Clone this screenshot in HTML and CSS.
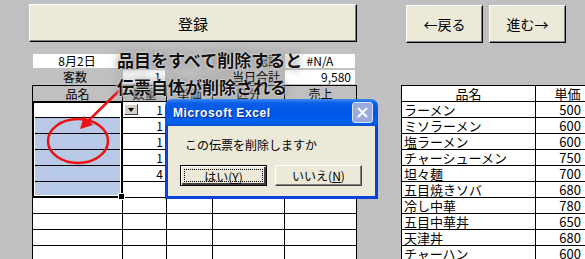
FILE: index.html
```html
<!DOCTYPE html>
<html>
<head>
    <meta charset="UTF-8">
    <title>伝票入力</title>
    <link rel="stylesheet" href="styles.css">
</head>
<body>
<div class="sheet">

    <div class="toolbar">
        <button class="btn btnRegister">登録</button>
        <div class="nav">
            <button class="btn btnNav">←戻る</button>
            <button class="btn btnNav">進む→</button>
        </div>
    </div>

    <div class="main">
        <div class="slip">
            <div class="info">
                <div class="box center">8月2日</div>
                <div></div>
                <div></div>
                <div class="label">総計</div>
                <div class="box center">#N/A</div>
                <div class="label center">客数</div>
                <div class="box right">1</div>
                <div></div>
                <div class="label">当日合計</div>
                <div class="box right">9,580</div>
            </div>

            <table class="slipTable">
                <colgroup>
                    <col style="width:90px"><col style="width:44px"><col style="width:46px"><col style="width:72px"><col style="width:72px">
                </colgroup>
                <tr class="head"><td>品名</td><td>数量</td><td>単価</td><td>区分</td><td>売上</td></tr>
                <tr><td></td><td class="qty"><span class="dropdown"></span>1</td><td></td><td></td><td></td></tr>
                <tr><td class="sel"></td><td class="num">1</td><td></td><td></td><td></td></tr>
                <tr><td class="sel"></td><td class="num">1</td><td></td><td></td><td></td></tr>
                <tr><td class="sel"></td><td class="num">1</td><td></td><td></td><td></td></tr>
                <tr><td class="sel"></td><td class="num">4</td><td></td><td></td><td></td></tr>
                <tr><td class="sel"></td><td></td><td></td><td></td><td></td></tr>
                <tr><td></td><td></td><td></td><td></td><td></td></tr>
                <tr><td></td><td></td><td></td><td></td><td></td></tr>
                <tr><td></td><td></td><td></td><td></td><td></td></tr>
                <tr><td></td><td></td><td></td><td></td><td></td></tr>
                <tr><td></td><td></td><td></td><td></td><td></td></tr>
            </table>

            <div class="selection"><span class="fillHandle"></span></div>
        </div>

        <table class="menu">
            <colgroup><col style="width:134px"><col style="width:64px"></colgroup>
            <tr class="head"><td class="center">品名</td><td class="center">単価</td></tr>
            <tr><td>ラーメン</td><td class="num">500</td></tr>
            <tr><td>ミソラーメン</td><td class="num">600</td></tr>
            <tr><td>塩ラーメン</td><td class="num">600</td></tr>
            <tr><td>チャーシューメン</td><td class="num">750</td></tr>
            <tr><td>坦々麺</td><td class="num">700</td></tr>
            <tr><td>五目焼きソバ</td><td class="num">680</td></tr>
            <tr><td>冷し中華</td><td class="num">780</td></tr>
            <tr><td>五目中華丼</td><td class="num">650</td></tr>
            <tr><td>天津丼</td><td class="num">680</td></tr>
            <tr><td>チャーハン</td><td class="num">600</td></tr>
        </table>
    </div>

    <!-- annotation drawn over the sheet -->
    <svg class="marks" width="585" height="259" viewBox="0 0 585 259">
        <ellipse cx="78" cy="141" rx="30" ry="22" fill="none" stroke="#ee1111" stroke-width="2.5"/>
        <line x1="124" y1="86" x2="87" y2="122" stroke="#ee1111" stroke-width="2.5"/>
        <polygon points="80,129 84,116 93,125" fill="#ee1111"/>
    </svg>

    <div class="callout">品目をすべて削除すると<br>伝票自体が削除される</div>

    <div class="dialog">
        <div class="titleBar">
            <span class="title">Microsoft Excel</span>
            <span class="close">
                <svg width="13" height="13" viewBox="0 0 13 13"><path d="M2 2 L11 11 M11 2 L2 11" stroke="#fff" stroke-width="2"/></svg>
            </span>
        </div>
        <div class="dialogBody">
            <p class="message">この伝票を削除しますか</p>
            <div class="dialogButtons">
                <button class="dlgBtn default"><span class="focus">はい(<u>Y</u>)</span></button>
                <button class="dlgBtn">いいえ(<u>N</u>)</button>
            </div>
        </div>
    </div>

</div>
</body>
</html>
```

FILE: styles.css
```css
body {
    margin: 0;
    background-color: #c0c0c0;
    font-family: "Noto Sans CJK JP", sans-serif;
    font-size: 12px;
    color: #000;
}

.sheet {
    position: relative;
    width: 585px;
    height: 259px;
    overflow: hidden;
}

/* buttons on top */
.toolbar {
    display: flex;
    padding: 4px 0 0 29px;
}

.btn {
    background-color: #ece9d8;
    border: 1px solid;
    border-color: #fff #000 #000 #fff;
    box-shadow: inset -1px -1px 0 #808080;
    font-family: "Noto Sans CJK JP", sans-serif;
    font-size: 14px;
    color: #000;
    padding: 0;
}

.btnRegister {
    width: 328px;
    height: 38px;
    font-size: 15px;
}

.nav {
    display: flex;
    gap: 6px;
    margin: 1px 0 0 49px;
}

.btnNav {
    width: 77px;
    height: 38px;
}

.main {
    display: flex;
    align-items: flex-start;
    margin-top: 11px;
}

/* slip on the left */
.slip {
    position: relative;
    margin-left: 32px;
    width: 325px;
}

.info {
    display: grid;
    grid-template-columns: 90px 44px 46px 72px 72px;
    grid-template-rows: 14px 14px;
    row-gap: 2px;
    margin-bottom: 1px;
    line-height: 14px;
}

.box {
    background-color: #fff;
    margin: 0 1px;
    padding: 0 4px;
}

.label {
    text-align: right;
    padding-right: 4px;
}

.center {
    text-align: center;
}

.right {
    text-align: right;
}

table {
    border-collapse: collapse;
    table-layout: fixed;
}

td {
    border: 1px solid #000;
    height: 15px;
    padding: 0 3px;
    line-height: 15px;
    white-space: nowrap;
    overflow: hidden;
}

.slipTable {
    width: 325px;
}

.slipTable td {
    background-color: #fff;
}

.slipTable .head td {
    background-color: #c0c0c0;
    text-align: center;
}

.slipTable td.sel {
    background-color: #b7c9e7;
}

.num {
    text-align: right;
}

.qty {
    text-align: right;
    padding-left: 1px;
}

.dropdown {
    float: left;
    width: 14px;
    height: 11px;
    margin-top: 2px;
    background-color: #d4d0c8;
    border: 1px solid;
    border-color: #fff #404040 #404040 #fff;
    box-sizing: border-box;
    position: relative;
}

.dropdown::after {
    content: "";
    position: absolute;
    left: 3px;
    top: 3px;
    border-left: 3px solid transparent;
    border-right: 3px solid transparent;
    border-top: 4px solid #000;
}

.selection {
    position: absolute;
    left: 0;
    top: 47px;
    width: 91px;
    height: 97px;
    border: 2px solid #000;
    box-sizing: border-box;
    box-shadow: inset 0 0 0 1px #fff;
}

.fillHandle {
    position: absolute;
    right: -4px;
    bottom: -4px;
    width: 5px;
    height: 5px;
    background-color: #000;
    border: 1px solid #fff;
}

/* menu on the right */
.menu {
    margin: 31px 0 0 44px;
    width: 198px;
    background-color: #fff;
    font-size: 13px;
}

.menu td {
    padding: 0 2px;
}

.menu td.num {
    padding-right: 18px;
}

/* annotation */
.marks {
    position: absolute;
    left: 0;
    top: 0;
}

.callout {
    position: absolute;
    left: 117px;
    top: 46px;
    font-size: 17px;
    font-weight: 700;
    line-height: 27px;
    color: #111;
    white-space: nowrap;
    text-shadow: 0 0 2px #fff, 0 0 5px #ddd, 0 0 9px #666;
}

/* message box */
.dialog {
    position: absolute;
    left: 165px;
    top: 99px;
    width: 213px;
    height: 100px;
    display: flex;
    flex-direction: column;
}

.titleBar {
    height: 27px;
    border-radius: 7px 7px 0 0;
    background: linear-gradient(#3d8cf6, #0a5ee8 15%, #0055e5 50%, #0361f2 85%, #0a4fd0);
    display: flex;
    align-items: center;
    justify-content: space-between;
    padding: 0 5px 0 8px;
}

.title {
    color: #fff;
    font-family: "Liberation Sans", Arial, sans-serif;
    font-weight: 700;
    font-size: 12px;
    letter-spacing: 0.6px;
    text-shadow: 1px 1px 0 #0a2a8a;
}

.close {
    width: 19px;
    height: 19px;
    border: 1px solid #dde4f8;
    border-radius: 3px;
    background-color: #9aaae0;
    display: flex;
    justify-content: center;
    align-items: center;
}

.dialogBody {
    flex: 1;
    background-color: #ece9d8;
    border: 3px solid #0842d8;
    border-top: none;
}

.message {
    margin: 10px 0 0 17px;
    line-height: 17px;
}

.dialogButtons {
    display: flex;
    gap: 8px;
    margin: 12px 0 0 12px;
}

.dlgBtn {
    width: 87px;
    height: 21px;
    padding: 0;
    background-color: #ece9d8;
    border: 1px solid;
    border-color: #fff #404040 #404040 #fff;
    box-shadow: inset -1px -1px 0 #808080;
    font-family: "Noto Sans CJK JP", sans-serif;
    font-size: 12px;
    color: #000;
}

.dlgBtn.default {
    border: 1px solid #000;
    box-shadow: inset 1px 1px 0 #fff, inset -2px -2px 0 #404040;
    display: flex;
    padding: 3px;
}

.focus {
    flex: 1;
    border: 1px dotted #000;
    line-height: 13px;
}
```
